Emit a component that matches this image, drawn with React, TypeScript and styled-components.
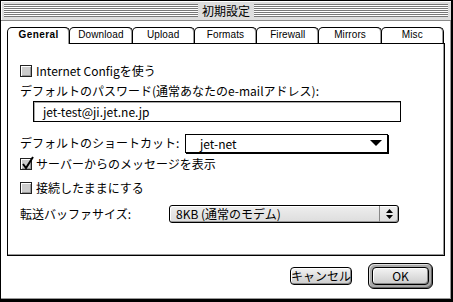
import React from 'react';
import styled, { createGlobalStyle } from 'styled-components';

const GlobalStyle = createGlobalStyle`
  html, body { margin: 0; padding: 0; background: #fff; }
  body {
    font-family: "Noto Sans CJK JP", "Liberation Sans", sans-serif;
    font-size: 12px;
    color: #000;
  }
`;

const Window = styled.div`
  width: 453px;
  height: 302px;
  box-sizing: border-box;
  border: 1px solid #000;
  border-right-width: 2px;
  border-bottom-width: 3px;
  background: #fff;
  box-shadow: inset -1px -1px 0 #999;
  display: flex;
  flex-direction: column;
`;

const TitleBar = styled.div`
  height: 19px;
  flex: none;
  background: #ddd;
  border-bottom: 1px solid #888;
  box-shadow: inset 1px 1px 0 #fff;
  display: flex;
  align-items: center;
  gap: 4px;
  padding: 0 3px;
`;

const Stripes = styled.div`
  flex: 1;
  height: 13px;
  background: repeating-linear-gradient(to bottom, #777 0 1px, #fff 1px 2px);
`;

const Title = styled.div`
  font-size: 12px;
  line-height: 19px;
  white-space: nowrap;
`;

const Body = styled.div`
  flex: 1;
  display: flex;
  flex-direction: column;
  padding: 6px 6px 0 6px;
`;

const TabRow = styled.div`
  display: flex;
  height: 16px;
  padding-right: 1px;
`;

const Tab = styled.div<{ $active?: boolean }>`
  position: relative;
  z-index: ${(p) => (p.$active ? 2 : 1)};
  flex: 1;
  box-sizing: border-box;
  height: ${(p) => (p.$active ? '17px' : '16px')};
  margin-left: -1px;
  &:first-child { margin-left: 0; }
  border: 1px solid #000;
  border-bottom: none;
  border-radius: 5px 5px 0 0;
  background: #fff;
  box-shadow: inset -1px 0 0 #999;
  font-family: "Liberation Sans", Arial, sans-serif;
  font-size: 10px;
  font-weight: ${(p) => (p.$active ? 700 : 400)};
  letter-spacing: ${(p) => (p.$active ? '0.4px' : '0.1px')};
  line-height: 14px;
  text-align: center;
`;

const Panel = styled.div`
  height: 213px;
  box-sizing: border-box;
  border: 1px solid #000;
  box-shadow: inset -1px -1px 0 #999;
  padding: 19px 12px 0 12px;
  display: flex;
  flex-direction: column;
`;

const Row = styled.div<{ $top: number; $height: number }>`
  display: flex;
  align-items: center;
  margin-top: ${(p) => p.$top}px;
  height: ${(p) => p.$height}px;
  line-height: 16px;
  white-space: nowrap;
`;

const Label = styled.span<{ $width?: number }>`
  flex: none;
  width: ${(p) => (p.$width ? `${p.$width}px` : 'auto')};
  margin-right: 3px;
`;

const Box = styled.span`
  position: relative;
  flex: none;
  width: 12px;
  height: 12px;
  box-sizing: border-box;
  border: 1px solid #222;
  background: #ccc;
  box-shadow: inset 1px 1px 0 #fff, inset -1px -1px 0 #999;
  margin-right: 4px;
`;

const Mark = styled.svg`
  position: absolute;
  left: 0;
  top: -4px;
`;

const Field = styled.div`
  margin-left: 13px;
  width: 368px;
  height: 21px;
  box-sizing: border-box;
  border: 1px solid #000;
  box-shadow: inset 1px 1px 0 #aaa;
  padding-left: 9px;
  line-height: 19px;
`;

const Popup = styled.div`
  width: 203px;
  height: 19px;
  box-sizing: border-box;
  border: 1px solid #000;
  box-shadow: 1px 1px 0 #000;
  background: #fff;
  display: flex;
  align-items: center;
  justify-content: space-between;
  padding: 0 5px 0 14px;
  line-height: 17px;
`;

const Triangle = styled.span`
  width: 0;
  height: 0;
  border-left: 6px solid transparent;
  border-right: 6px solid transparent;
  border-top: 6px solid #000;
`;

const Menu = styled.div`
  width: 230px;
  height: 18px;
  box-sizing: border-box;
  border: 1px solid #000;
  border-radius: 3px;
  background: linear-gradient(#eee, #ddd);
  box-shadow: inset 1px 1px 0 #fff, inset -1px -1px 0 #999;
  display: flex;
  line-height: 16px;
`;

const MenuText = styled.span`
  flex: 1;
  padding-left: 6px;
`;

const Arrows = styled.span`
  width: 18px;
  border-left: 1px solid #888;
  display: flex;
  align-items: center;
  justify-content: center;
`;

const ButtonRow = styled.div`
  display: flex;
  justify-content: flex-end;
  align-items: center;
  gap: 16px;
  padding: 7px 12px 0 0;
`;

const Button = styled.div<{ $width: number }>`
  width: ${(p) => p.$width}px;
  height: 18px;
  box-sizing: border-box;
  border: 1px solid #000;
  border-radius: 4px;
  background: linear-gradient(#f4f4f4, #ccc);
  box-shadow: inset 1px 1px 0 #fff, inset -1px -1px 0 #888;
  text-align: center;
  line-height: 16px;
  font-size: 12px;
  white-space: nowrap;
`;

const DefaultRing = styled.div`
  border: 1px solid #000;
  border-radius: 6px;
  padding: 3px;
  background: #aaa;
  box-shadow: inset 1px 1px 0 #ddd, inset -1px -1px 0 #666;
`;

const Check = ({ checked }: { checked?: boolean }) => (
  <Box>
    {checked && (
      <Mark width="14" height="15" viewBox="0 0 14 15">
        <path d="M2 9 L5 13 L12 2" fill="none" stroke="#000" strokeWidth="2" />
      </Mark>
    )}
  </Box>
);

const tabs = ['General', 'Download', 'Upload', 'Formats', 'Firewall', 'Mirrors', 'Misc'];

export default function App() {
  return (
    <>
      <GlobalStyle />
      <Window>
        <TitleBar>
          <Stripes />
          <Title>初期設定</Title>
          <Stripes />
        </TitleBar>
        <Body>
          <TabRow>
            {tabs.map((t, i) => (
              <Tab key={t} $active={i === 0}>
                {t}
              </Tab>
            ))}
          </TabRow>
          <Panel>
            <Row $top={0} $height={16}>
              <Check />
              Internet Configを使う
            </Row>
            <Row $top={4} $height={16}>
              デフォルトのパスワード(通常あなたのe-mailアドレス):
            </Row>
            <Row $top={2} $height={21}>
              <Field>jet-test@ji.jet.ne.jp</Field>
            </Row>
            <Row $top={11} $height={20}>
              <Label $width={162}>デフォルトのショートカット:</Label>
              <Popup>
                jet-net
                <Triangle />
              </Popup>
            </Row>
            <Row $top={3} $height={16}>
              <Check checked />
              サーバーからのメッセージを表示
            </Row>
            <Row $top={8} $height={16}>
              <Check />
              接続したままにする
            </Row>
            <Row $top={9} $height={18}>
              <Label $width={146}>転送バッファサイズ:</Label>
              <Menu>
                <MenuText>8KB (通常のモデム)</MenuText>
                <Arrows>
                  <svg width="7" height="10" viewBox="0 0 7 10">
                    <path d="M3.5 0 L7 4 L0 4 Z M0 6 L7 6 L3.5 10 Z" fill="#000" />
                  </svg>
                </Arrows>
              </Menu>
            </Row>
          </Panel>
          <ButtonRow>
            <Button $width={62}>キャンセル</Button>
            <DefaultRing>
              <Button $width={57}>OK</Button>
            </DefaultRing>
          </ButtonRow>
        </Body>
      </Window>
    </>
  );
}
